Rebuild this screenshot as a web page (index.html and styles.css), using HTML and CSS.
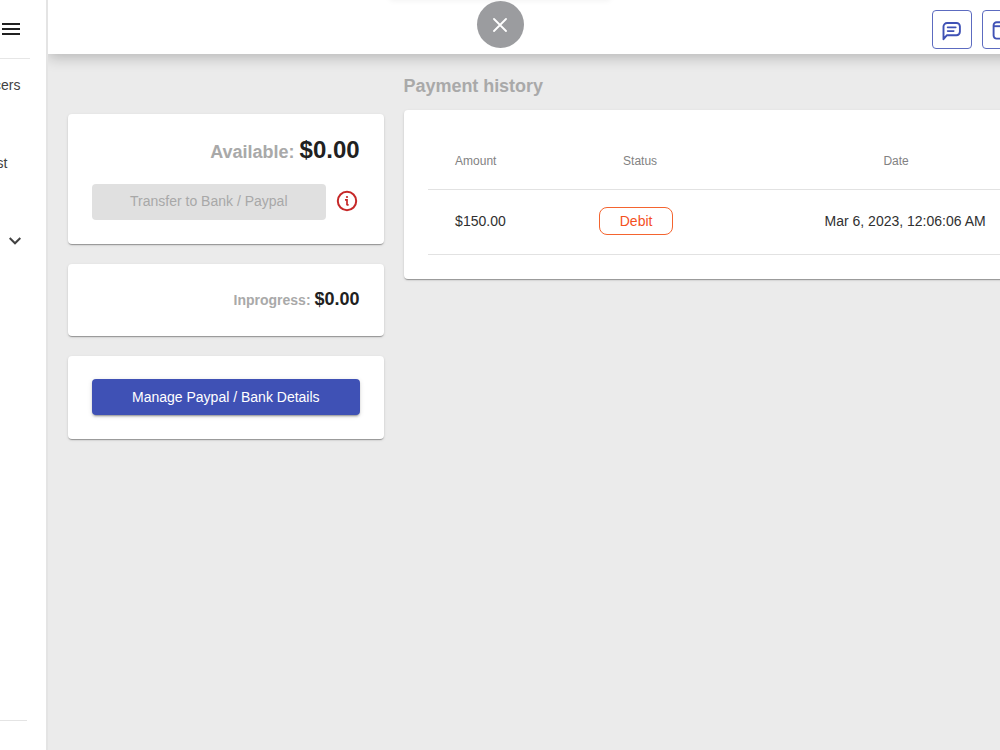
FILE: index.html
```html
<!DOCTYPE html>
<html lang="en">
<head>
  <meta charset="UTF-8">
  <meta name="viewport" content="width=device-width, initial-scale=1.0">
  <title>Payment history</title>
  <link rel="stylesheet" href="styles.css">
</head>
<body>
  <div class="app">
    <aside class="sidebar">
      <div class="sidebar-top">
        <svg class="menu-icon" width="18" height="12" viewBox="0 0 18 12" fill="#212121">
          <path d="M0 0h18v2H0zM0 5h18v2H0zM0 10h18v2H0z"/>
        </svg>
      </div>
      <nav class="sidebar-nav">
        <span class="nav-item nav-first">cers</span>
        <span class="nav-item nav-second">st</span>
        <span class="nav-item nav-more">
          <svg width="12" height="8" viewBox="0 0 12 8" fill="none" stroke="#424242" stroke-width="2">
            <path d="M.7 1L6 6.3 11.3 1"/>
          </svg>
        </span>
      </nav>
      <div class="sidebar-bottom"></div>
    </aside>

    <div class="content">
      <header class="topbar">
        <div class="topbar-actions">
          <button class="icon-btn">
            <svg width="20" height="20" viewBox="0 0 20 20" fill="none" stroke="#3f51b5" stroke-width="1.9" stroke-linecap="round" stroke-linejoin="round">
              <path d="M1.5 18.2V5.6a3.6 3.6 0 0 1 3.6-3.6h9.4a3.4 3.4 0 0 1 3.4 3.4v5.4a3.4 3.4 0 0 1-3.4 3.4H5z"/>
              <path d="M5.6 6.4h8.2M5.6 10.1h6.2" stroke-width="1.6"/>
            </svg>
          </button>
          <button class="icon-btn">
            <svg width="20" height="20" viewBox="0 0 20 20" fill="none" stroke="#3f51b5" stroke-width="1.9">
              <rect x="1.6" y="1.2" width="16.8" height="16.4" rx="3"/>
              <path d="M1.6 5.2h16.8"/>
            </svg>
          </button>
        </div>
      </header>

      <main class="page">
        <section class="balance">
          <div class="card card-available">
            <div class="amount-row">
              <span class="label">Available:</span>
              <span class="value">$0.00</span>
            </div>
            <div class="transfer-row">
              <button class="btn btn-disabled" disabled>Transfer to Bank / Paypal</button>
              <svg class="info-icon" width="22" height="22" viewBox="0 0 22 22" fill="none" stroke="#c62828">
                <circle cx="11" cy="11" r="9.2" stroke-width="2"/>
                <path d="M9 9.8h2v5.2M10.6 14.9h2" stroke-width="1.7"/>
                <circle cx="11" cy="7" r="1.1" fill="#c62828" stroke="none"/>
              </svg>
            </div>
          </div>

          <div class="card card-progress">
            <div class="amount-row small">
              <span class="label">Inprogress:</span>
              <span class="value">$0.00</span>
            </div>
          </div>

          <div class="card card-manage">
            <button class="btn btn-primary">Manage Paypal / Bank Details</button>
          </div>
        </section>

        <section class="history">
          <h2>Payment history</h2>
          <div class="card card-history">
            <table>
              <thead>
                <tr>
                  <th class="col-amount">Amount</th>
                  <th class="col-status">Status</th>
                  <th class="col-date">Date</th>
                </tr>
              </thead>
              <tbody>
                <tr>
                  <td class="col-amount">$150.00</td>
                  <td class="col-status"><span class="badge">Debit</span></td>
                  <td class="col-date">Mar 6, 2023, 12:06:06 AM</td>
                </tr>
              </tbody>
            </table>
          </div>
        </section>
      </main>
    </div>
  </div>

  <div class="top-panel"></div>
  <button class="close-btn">
    <svg width="14" height="14" viewBox="0 0 14 14" stroke="#fff" stroke-width="1.8" stroke-linecap="round">
      <path d="M1 1l12 12M13 1L1 13"/>
    </svg>
  </button>
</body>
</html>
```

FILE: styles.css
```css
* {
  box-sizing: border-box;
  margin: 0;
  padding: 0;
}

body {
  font-family: "Liberation Sans", Arial, sans-serif;
  font-size: 14px;
  color: #212121;
  background: #ebebeb;
  height: 100vh;
  overflow: hidden;
}

button {
  font-family: inherit;
  cursor: pointer;
}

svg {
  display: block;
}

.app {
  display: flex;
  height: 100vh;
  overflow: hidden;
}

/* sidebar */
.sidebar {
  display: flex;
  flex-direction: column;
  flex: 0 0 48px;
  background: #fff;
  border-right: 2px solid #e4e4e4;
  overflow: hidden;
}

.sidebar-top {
  width: 30px;
  height: 59px;
  padding: 23px 0 0 2px;
  border-bottom: 1px solid #e6e6e6;
}

.sidebar-nav {
  display: flex;
  flex-direction: column;
  flex: 1;
}

.nav-item {
  display: flex;
  align-items: center;
  justify-content: flex-end;
  color: #424242;
}

.nav-first {
  width: 20.5px;
  height: 52px;
}

.nav-second {
  width: 7.5px;
  height: 104px;
}

.nav-more {
  width: 20.5px;
  height: 52px;
}

.sidebar-bottom {
  width: 27px;
  height: 30px;
  border-top: 1px solid #e4e4e4;
}

/* top bar */
.content {
  display: flex;
  flex-direction: column;
  flex: 0 0 1200px;
  overflow: hidden;
}

.topbar {
  flex: 0 0 54px;
  padding: 10px 0 0 884px;
  background: #fff;
  box-shadow: 0 3px 14px rgba(0, 0, 0, 0.24);
}

.topbar-actions {
  display: flex;
  gap: 10px;
}

.icon-btn {
  display: flex;
  align-items: center;
  justify-content: center;
  flex: 0 0 40px;
  height: 38.5px;
  padding-top: 3px;
  background: #fff;
  border: 1px solid #5c6bc0;
  border-radius: 4px;
}

/* page */
.page {
  display: flex;
  align-items: flex-start;
  gap: 20px;
  padding: 20px 0 0 20px;
}

.balance {
  display: flex;
  flex-direction: column;
  flex: 0 0 315.6px;
  gap: 20px;
  padding-top: 40px;
}

.card {
  background: #fff;
  border-radius: 4px;
  box-shadow: 0 2px 1px -1px rgba(0, 0, 0, 0.2), 0 1px 1px rgba(0, 0, 0, 0.14), 0 1px 3px rgba(0, 0, 0, 0.12);
}

.card-available {
  height: 129.8px;
  padding: 20px 24px;
}

.card-progress {
  height: 71.8px;
  padding: 19px 24px;
}

.card-manage {
  height: 83.8px;
  padding: 23.8px 24px;
}

.amount-row {
  display: flex;
  align-items: baseline;
  justify-content: flex-end;
  gap: 5px;
  height: 50px;
  line-height: 32px;
  font-weight: bold;
}

.amount-row .label {
  font-size: 18px;
  color: #a9a9a9;
}

.amount-row .value {
  font-size: 24px;
}

.amount-row.small {
  gap: 4px;
}

.amount-row.small .label {
  font-size: 14px;
}

.amount-row.small .value {
  font-size: 18px;
}

.transfer-row {
  display: flex;
  align-items: flex-start;
  gap: 10px;
}

.info-icon {
  margin-top: 6px;
}

.btn {
  width: 100%;
  height: 35.7px;
  padding-bottom: 1px;
  border: none;
  border-radius: 4px;
  font-size: 14px;
}

.btn-disabled {
  flex: 0 0 233.6px;
  background: #e0e0e0;
  color: #a8a8a8;
}

.btn-primary {
  background: #3f51b5;
  color: #fff;
  box-shadow: 0 3px 1px -2px rgba(0, 0, 0, 0.2), 0 2px 2px rgba(0, 0, 0, 0.14), 0 1px 5px rgba(0, 0, 0, 0.12);
}

/* history */
.history {
  flex: 0 0 760px;
}

.history h2 {
  height: 36px;
  line-height: 24px;
  font-size: 18px;
  letter-spacing: -0.05px;
  color: #a9a9a9;
}

.card-history {
  height: 168.5px;
  padding: 24px;
}

table {
  width: 712px;
  table-layout: fixed;
  border-collapse: collapse;
}

th,
td {
  border-bottom: 1px solid #e2e2e2;
  text-align: center;
}

th {
  height: 55px;
  font-size: 12px;
  font-weight: normal;
  color: #828282;
}

td {
  height: 65px;
  padding-bottom: 1px;
  font-size: 14px;
  color: #303030;
}

.col-amount {
  width: 130px;
  padding-left: 27.5px;
  text-align: left;
}

.col-status {
  width: 166px;
}

th.col-status {
  padding-right: 1px;
}

td.col-status {
  padding-right: 9px;
}

.col-date {
  width: 416px;
  padding-right: 53px;
}

th.col-date {
  padding-right: 71px;
}

.badge {
  display: inline-block;
  width: 74px;
  height: 28px;
  line-height: 26px;
  border: 1px solid #f4642f;
  border-radius: 8px;
  color: #f4511e;
}

/* overlay */
.top-panel {
  position: absolute;
  top: -10px;
  left: 390px;
  width: 220px;
  height: 10px;
  box-shadow: 0 0 6px rgba(0, 0, 0, 0.07);
}

.close-btn {
  position: absolute;
  top: 1px;
  left: 476.5px;
  display: flex;
  align-items: center;
  justify-content: center;
  width: 47px;
  height: 47px;
  border: none;
  border-radius: 50%;
  background: #9b9c9f;
}
```
